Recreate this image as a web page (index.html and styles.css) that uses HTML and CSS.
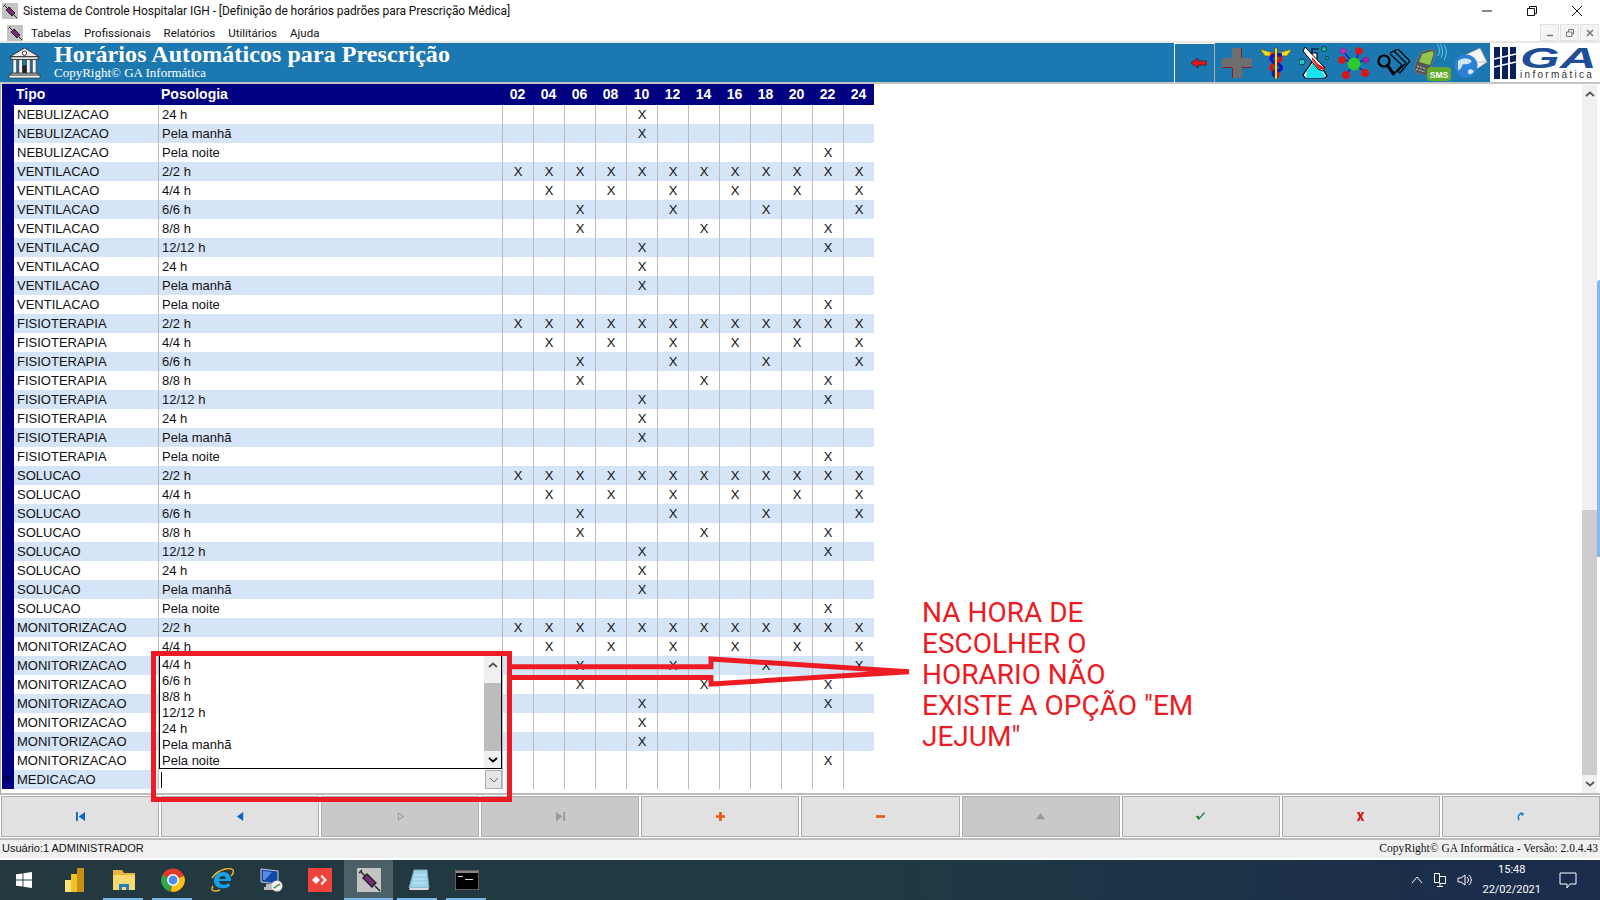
FILE: index.html
```html
<!DOCTYPE html>
<html>
<head>
    <title>Sistema de Controle Hospitalar IGH</title>
    <link rel="stylesheet" href="styles.css">
</head>
<body>
    <div class="titlebar">
        <svg class="app-icon" viewBox="0 0 16 16"><rect width="16" height="16" fill="#c4c4c4"/><path d="M1.500 3.500l2-2M2.500 2.500l3 3M4 7l3-3 6 6-3 3z" stroke="#222" fill="#7a2a78"/><path d="M7 6l2-1M12 12l3 3" stroke="#222"/></svg>
        <span class="title-text">Sistema de Controle Hospitalar IGH - [Definição de horários padrões para Prescrição Médica]</span>
        <div class="win-controls">
            <svg viewBox="0 0 12 12"><path d="M1 6h10" stroke="#111"/></svg>
            <svg viewBox="0 0 12 12"><path d="M1.500 3.500h7v7h-7zM3.500 3.500v-2h7v7h-2" stroke="#111" fill="none"/></svg>
            <svg viewBox="0 0 12 12"><path d="M1 1l10 10M11 1L1 11" stroke="#111" fill="none"/></svg>
        </div>
    </div>

    <div class="menubar">
        <svg class="app-icon" viewBox="0 0 16 16"><rect width="16" height="16" fill="#c4c4c4"/><path d="M1.500 3.500l2-2M2.500 2.500l3 3M4 7l3-3 6 6-3 3z" stroke="#222" fill="#7a2a78"/><path d="M7 6l2-1M12 12l3 3" stroke="#222"/></svg>
        <span>Tabelas</span>
        <span>Profissionais</span>
        <span>Relatórios</span>
        <span>Utilitários</span>
        <span>Ajuda</span>
        <div class="child-controls">
            <i><svg viewBox="0 0 10 10"><path d="M2 7.500h6" stroke="#777" stroke-width="1.500"/></svg></i>
            <i><svg viewBox="0 0 10 10"><path d="M1.500 4h5.500v4.500h-5.500zM3.500 4v-2.500h5v4.500h-1.500" stroke="#777" fill="none"/></svg></i>
            <i><svg viewBox="0 0 10 10"><path d="M2 2l6 6M8 2l-6 6" stroke="#777" stroke-width="1.500"/></svg></i>
        </div>
    </div>

    <div class="banner">
        <svg class="bank-icon" viewBox="0 0 34 34">
            <path d="M2 11L17 2l15 9z" fill="#e8e8e8" stroke="#333"/>
            <circle cx="17" cy="7.500" r="2.200" fill="#fff" stroke="#333"/>
            <rect x="3" y="11" width="28" height="3" fill="#ddd" stroke="#333"/>
            <path d="M5 14h4v14H5zM11 14h4v14h-4zM19 14h4v14h-4zM25 14h4v14h-4z" fill="#f2f2f2" stroke="#333" stroke-width=".8"/>
            <rect x="15" y="20" width="4" height="8" fill="#222"/>
            <rect x="3" y="28" width="28" height="2" fill="#ddd" stroke="#333" stroke-width=".8"/>
            <rect x="1" y="30" width="32" height="3" fill="#eee" stroke="#333" stroke-width=".8"/>
        </svg>
        <div class="banner-text">
            <div class="banner-title">Horários Automáticos para Prescrição</div>
            <div class="banner-sub">CopyRight© GA Informática</div>
        </div>
        <div class="tools">
            <div class="tool-back">
                <svg viewBox="0 0 16 10" width="16" height="10"><path d="M0 5l7-5v3h9v4H7v3z" fill="#e8141c" stroke="#222" stroke-width=".7"/></svg>
            </div>
            <div class="tool"><svg width="30" height="30" viewBox="0 0 30 30"><path d="M10 0h10v10h10v10H20v10H10V20H0V10h10z" fill="#6e6e6e"/><path d="M0 19.500h10M20 19.500h10M19.500 0v10M10.500 20v10" stroke="#8c1c1c"/></svg></div>
            <div class="tool"><svg width="32" height="32" viewBox="0 0 32 32"><path d="M14 6L0 2l5 7 9 0zM18 6L32 2l-5 7-9 0z" fill="#e8e020" stroke="#554" stroke-width=".7"/><path d="M10 8c12-1 14 5 6 8-7 3-7 7 0 8 4 1 3 4 0 6" stroke="#e01010" stroke-width="3.500" fill="none"/><path d="M22 8C10 7 8 13 16 16c7 3 7 7 0 8-4 1-3 4 0 6" stroke="#1010c8" stroke-width="3.500" fill="none"/><rect x="14.800" y="1" width="2.400" height="31" fill="#f0e010" stroke="#222" stroke-width=".4"/></svg></div>
            <div class="tool"><svg width="32" height="33" viewBox="0 0 32 33"><path d="M12 7l6 0 0 8 10 15-2 2H6l-2-3 9-13z" fill="#fff" stroke="#000" stroke-width="1.200"/><path d="M8 25l6-8 4 1 8 12-2 2H7z" fill="#18e4f0"/><path d="M12 3l8 0M13 3v10" stroke="#000"/><path d="M8 1L6 5l15 18 5 2 2-3z" fill="#fff" stroke="#000" stroke-width="1" transform="translate(-2 0)"/><path d="M13 11l6 7 7 4-2 2-5-2-6-8z" fill="#e81c1c"/><circle cx="3" cy="16" r="3" fill="#1cc8c8" stroke="#000" stroke-width=".6"/><circle cx="25" cy="3" r="2.500" fill="#18c090" stroke="#000" stroke-width=".6"/><circle cx="28" cy="12" r="1.500" fill="#18c090" stroke="#000" stroke-width=".5"/></svg></div>
            <div class="tool"><svg width="32" height="32" viewBox="0 0 32 32"><path d="M16 17L5 12M16 17L21 6M16 17L5 4M16 17L8 28M16 17l10 7M16 17l11-4" stroke="#1818c8" stroke-width="1.500"/><circle cx="16" cy="17" r="6.500" fill="#2cc82c"/><circle cx="5" cy="4" r="3" fill="#c828c8" stroke="#444" stroke-width=".5"/><circle cx="21" cy="4" r="3.800" fill="#d81818"/><circle cx="4" cy="13" r="3.800" fill="#d81818"/><circle cx="28" cy="13" r="3" fill="#b018b0" stroke="#444" stroke-width=".5"/><circle cx="8" cy="28" r="4" fill="#d81818"/><circle cx="27" cy="26" r="4" fill="#d81818"/></svg></div>
            <div class="tool"><svg width="34" height="28" viewBox="0 0 34 28"><path d="M14 4l8-4 12 12-10 12-4-3M18 2l12 12-9 9M14 5l12 11-7 8-4-3" fill="none" stroke="#000" stroke-width="1.200"/><circle cx="8" cy="12" r="5.500" fill="none" stroke="#000" stroke-width="2.200"/><path d="M12 17l6 9" stroke="#000" stroke-width="3"/></svg></div>
            <div class="tool"><svg width="38" height="38" viewBox="0 0 38 38"><path d="M8 8l11-3 4 3-8 24-12-3-2-6z" fill="#555" stroke="#888" stroke-width=".5"/><path d="M9 10l10-3 2 2-4 12-11-3z" fill="#8fc650"/><path d="M4 22l9 3M3 25l9 3" stroke="#ccc" stroke-dasharray="2 1"/><path d="M24 0c3 3 3 8 1 12M27 0c3 4 3 10 1 14M31 1c3 4 3 10 0 15" stroke="#5fd0e0" fill="none"/><rect x="14" y="23" width="24" height="14" rx="4" fill="#62ab2c"/><text x="26" y="33.500" class="sms-text">SMS</text></svg></div>
            <div class="tool"><svg width="33" height="31" viewBox="0 0 33 31"><path d="M9 9L26 1l7 14-16 11z" fill="#f6f6f6" stroke="#999" stroke-width=".6"/><path d="M10 9l13 6 10 0" stroke="#bbb" fill="none"/><circle cx="12" cy="19" r="11.500" fill="#2e7fd8"/><path d="M4 14c5-4 9-3 13-1 2 3-4 5-7 4-3 1-2 6-6 6zM20 24c-3-3-7-2-6 2 1 2 4 2 6-2z" fill="#cfe6fa"/></svg></div>
        </div>
        <div class="ga-logo">
            <svg viewBox="0 0 22 34" width="22" height="34"><path d="M0 1h6v32H0zM8 1h6v32H8zM16 1h6v32h-6z" fill="#0b1f5c"/><path d="M0 13l22-5M0 21l22-5" stroke="#fff" stroke-width="1.500"/></svg>
            <div class="ga-text">
                <div class="ga-big">GA</div>
                <div class="ga-small">informática</div>
            </div>
        </div>
    </div>

    <div class="main">
        <div class="grid-wrap">
            <table class="grid">
                <colgroup>
                    <col class="c-tipo"><col class="c-poso">
                    <col><col><col><col><col><col><col><col><col><col><col><col>
                </colgroup>
                <thead>
                    <tr><th class="tl">Tipo</th><th class="tl">Posologia</th><th>02</th><th>04</th><th>06</th><th>08</th><th>10</th><th>12</th><th>14</th><th>16</th><th>18</th><th>20</th><th>22</th><th>24</th></tr>
                </thead>
                <tbody>
                    <tr><td>NEBULIZACAO</td><td>24 h</td><td></td><td></td><td></td><td></td><td>X</td><td></td><td></td><td></td><td></td><td></td><td></td><td></td></tr>
                    <tr><td>NEBULIZACAO</td><td>Pela manhã</td><td></td><td></td><td></td><td></td><td>X</td><td></td><td></td><td></td><td></td><td></td><td></td><td></td></tr>
                    <tr><td>NEBULIZACAO</td><td>Pela noite</td><td></td><td></td><td></td><td></td><td></td><td></td><td></td><td></td><td></td><td></td><td>X</td><td></td></tr>
                    <tr><td>VENTILACAO</td><td>2/2 h</td><td>X</td><td>X</td><td>X</td><td>X</td><td>X</td><td>X</td><td>X</td><td>X</td><td>X</td><td>X</td><td>X</td><td>X</td></tr>
                    <tr><td>VENTILACAO</td><td>4/4 h</td><td></td><td>X</td><td></td><td>X</td><td></td><td>X</td><td></td><td>X</td><td></td><td>X</td><td></td><td>X</td></tr>
                    <tr><td>VENTILACAO</td><td>6/6 h</td><td></td><td></td><td>X</td><td></td><td></td><td>X</td><td></td><td></td><td>X</td><td></td><td></td><td>X</td></tr>
                    <tr><td>VENTILACAO</td><td>8/8 h</td><td></td><td></td><td>X</td><td></td><td></td><td></td><td>X</td><td></td><td></td><td></td><td>X</td><td></td></tr>
                    <tr><td>VENTILACAO</td><td>12/12 h</td><td></td><td></td><td></td><td></td><td>X</td><td></td><td></td><td></td><td></td><td></td><td>X</td><td></td></tr>
                    <tr><td>VENTILACAO</td><td>24 h</td><td></td><td></td><td></td><td></td><td>X</td><td></td><td></td><td></td><td></td><td></td><td></td><td></td></tr>
                    <tr><td>VENTILACAO</td><td>Pela manhã</td><td></td><td></td><td></td><td></td><td>X</td><td></td><td></td><td></td><td></td><td></td><td></td><td></td></tr>
                    <tr><td>VENTILACAO</td><td>Pela noite</td><td></td><td></td><td></td><td></td><td></td><td></td><td></td><td></td><td></td><td></td><td>X</td><td></td></tr>
                    <tr><td>FISIOTERAPIA</td><td>2/2 h</td><td>X</td><td>X</td><td>X</td><td>X</td><td>X</td><td>X</td><td>X</td><td>X</td><td>X</td><td>X</td><td>X</td><td>X</td></tr>
                    <tr><td>FISIOTERAPIA</td><td>4/4 h</td><td></td><td>X</td><td></td><td>X</td><td></td><td>X</td><td></td><td>X</td><td></td><td>X</td><td></td><td>X</td></tr>
                    <tr><td>FISIOTERAPIA</td><td>6/6 h</td><td></td><td></td><td>X</td><td></td><td></td><td>X</td><td></td><td></td><td>X</td><td></td><td></td><td>X</td></tr>
                    <tr><td>FISIOTERAPIA</td><td>8/8 h</td><td></td><td></td><td>X</td><td></td><td></td><td></td><td>X</td><td></td><td></td><td></td><td>X</td><td></td></tr>
                    <tr><td>FISIOTERAPIA</td><td>12/12 h</td><td></td><td></td><td></td><td></td><td>X</td><td></td><td></td><td></td><td></td><td></td><td>X</td><td></td></tr>
                    <tr><td>FISIOTERAPIA</td><td>24 h</td><td></td><td></td><td></td><td></td><td>X</td><td></td><td></td><td></td><td></td><td></td><td></td><td></td></tr>
                    <tr><td>FISIOTERAPIA</td><td>Pela manhã</td><td></td><td></td><td></td><td></td><td>X</td><td></td><td></td><td></td><td></td><td></td><td></td><td></td></tr>
                    <tr><td>FISIOTERAPIA</td><td>Pela noite</td><td></td><td></td><td></td><td></td><td></td><td></td><td></td><td></td><td></td><td></td><td>X</td><td></td></tr>
                    <tr><td>SOLUCAO</td><td>2/2 h</td><td>X</td><td>X</td><td>X</td><td>X</td><td>X</td><td>X</td><td>X</td><td>X</td><td>X</td><td>X</td><td>X</td><td>X</td></tr>
                    <tr><td>SOLUCAO</td><td>4/4 h</td><td></td><td>X</td><td></td><td>X</td><td></td><td>X</td><td></td><td>X</td><td></td><td>X</td><td></td><td>X</td></tr>
                    <tr><td>SOLUCAO</td><td>6/6 h</td><td></td><td></td><td>X</td><td></td><td></td><td>X</td><td></td><td></td><td>X</td><td></td><td></td><td>X</td></tr>
                    <tr><td>SOLUCAO</td><td>8/8 h</td><td></td><td></td><td>X</td><td></td><td></td><td></td><td>X</td><td></td><td></td><td></td><td>X</td><td></td></tr>
                    <tr><td>SOLUCAO</td><td>12/12 h</td><td></td><td></td><td></td><td></td><td>X</td><td></td><td></td><td></td><td></td><td></td><td>X</td><td></td></tr>
                    <tr><td>SOLUCAO</td><td>24 h</td><td></td><td></td><td></td><td></td><td>X</td><td></td><td></td><td></td><td></td><td></td><td></td><td></td></tr>
                    <tr><td>SOLUCAO</td><td>Pela manhã</td><td></td><td></td><td></td><td></td><td>X</td><td></td><td></td><td></td><td></td><td></td><td></td><td></td></tr>
                    <tr><td>SOLUCAO</td><td>Pela noite</td><td></td><td></td><td></td><td></td><td></td><td></td><td></td><td></td><td></td><td></td><td>X</td><td></td></tr>
                    <tr><td>MONITORIZACAO</td><td>2/2 h</td><td>X</td><td>X</td><td>X</td><td>X</td><td>X</td><td>X</td><td>X</td><td>X</td><td>X</td><td>X</td><td>X</td><td>X</td></tr>
                    <tr><td>MONITORIZACAO</td><td>4/4 h</td><td></td><td>X</td><td></td><td>X</td><td></td><td>X</td><td></td><td>X</td><td></td><td>X</td><td></td><td>X</td></tr>
                    <tr><td>MONITORIZACAO</td><td></td><td></td><td></td><td>X</td><td></td><td></td><td>X</td><td></td><td></td><td>X</td><td></td><td></td><td>X</td></tr>
                    <tr><td>MONITORIZACAO</td><td></td><td></td><td></td><td>X</td><td></td><td></td><td></td><td>X</td><td></td><td></td><td></td><td>X</td><td></td></tr>
                    <tr><td>MONITORIZACAO</td><td></td><td></td><td></td><td></td><td></td><td>X</td><td></td><td></td><td></td><td></td><td></td><td>X</td><td></td></tr>
                    <tr><td>MONITORIZACAO</td><td></td><td></td><td></td><td></td><td></td><td>X</td><td></td><td></td><td></td><td></td><td></td><td></td><td></td></tr>
                    <tr><td>MONITORIZACAO</td><td></td><td></td><td></td><td></td><td></td><td>X</td><td></td><td></td><td></td><td></td><td></td><td></td><td></td></tr>
                    <tr><td>MONITORIZACAO</td><td></td><td></td><td></td><td></td><td></td><td></td><td></td><td></td><td></td><td></td><td></td><td>X</td><td></td></tr>
                    <tr class="new-row"><td><span class="star">*</span>MEDICACAO</td><td></td><td></td><td></td><td></td><td></td><td></td><td></td><td></td><td></td><td></td><td></td><td></td><td></td></tr>
                </tbody>
            </table>
        </div>
        <div class="scrollbar">
            <div class="sb-btn"><svg viewBox="0 0 10 6" width="10" height="6"><path d="M1 5l4-3.500L9 5" stroke="#555" stroke-width="1.800" fill="none"/></svg></div>
            <div class="sb-track"><div class="sb-thumb"></div></div>
            <div class="sb-btn"><svg viewBox="0 0 10 6" width="10" height="6"><path d="M1 1l4 3.500L9 1" stroke="#555" stroke-width="1.800" fill="none"/></svg></div>
        </div>
    </div>

    <div class="nav">
        <div class="nav-btn"><svg viewBox="0 0 12 10"><path d="M1 0h2v10H1zM11 0v10L4 5z" fill="#0a64c8"/></svg></div>
        <div class="nav-btn"><svg viewBox="0 0 12 10"><path d="M9 0v10L2 5z" fill="#0a64c8"/></svg></div>
        <div class="nav-btn off"><svg viewBox="0 0 12 10"><path d="M3 0v10l7-5zM4 2v6l4-3z" fill="#999" fill-rule="evenodd"/></svg></div>
        <div class="nav-btn off"><svg viewBox="0 0 12 10"><path d="M1 0v10l7-5zM9 0h2v10H9z" fill="#999"/></svg></div>
        <div class="nav-btn"><svg viewBox="0 0 12 10"><path d="M4.500 0h3v3.500H11v3H7.500V10h-3V6.500H1v-3h3.500z" fill="#e85a10"/></svg></div>
        <div class="nav-btn"><svg viewBox="0 0 12 10"><path d="M1 3.500h10v3H1z" fill="#e85a10"/></svg></div>
        <div class="nav-btn off"><svg viewBox="0 0 12 10"><path d="M6 1l5 7H1z" fill="#999"/></svg></div>
        <div class="nav-btn"><svg viewBox="0 0 12 10"><path d="M1 5l3 4 7-8-1-1-5 6-2-2z" fill="#0a7a30"/></svg></div>
        <div class="nav-btn"><svg viewBox="0 0 12 10"><path d="M2 0h3l1 3 1.500-3H10L7.500 5 10 10H7.500L6 7 4.500 10H2l2.500-5z" fill="#d81818"/></svg></div>
        <div class="nav-btn"><svg viewBox="0 0 12 12"><path d="M4 11C2 7 3 3 7 2" stroke="#1a80c8" stroke-width="2" fill="none"/><path d="M6 0l5 2-3 4z" fill="#1a80c8"/></svg></div>
    </div>

    <div class="statusbar">
        <span>Usuário:1 ADMINISTRADOR</span>
        <span class="status-right">CopyRight© GA Informática - Versão: 2.0.4.43</span>
    </div>

    <div class="taskbar">
        <div class="task start"><svg viewBox="0 0 16 16" width="16" height="16"><path d="M0 2.300l6.500-.9v6.200H0zM7.400 1.300L16 0v7.600H7.400zM0 8.400h6.500v6.200L0 13.700zM7.400 8.400H16V16l-8.600-1.300z" fill="#fff"/></svg></div>
        <div class="task"><svg viewBox="0 0 20 24" width="20" height="24"><path d="M0 12h7v12H0z" fill="#f9e27a"/><path d="M6 6h7v18H6z" fill="#eec22c"/><path d="M12 0h7v24h-7z" fill="#c98f10"/></svg></div>
        <div class="task on"><svg viewBox="0 0 24 20" width="24" height="20"><path d="M1 0h9l2 3h11v17H1z" fill="#e8b440"/><path d="M1 5h22v15H1z" fill="#fcd96e"/><path d="M7 14h10v6h-3v-3h-4v3H7z" fill="#1a80c8"/></svg></div>
        <div class="task on"><svg viewBox="0 0 24 24" width="24" height="24"><circle cx="12" cy="12" r="11.500" fill="#e33b2e"/><path d="M12 12L1.500 7A11.500 11.500 0 0 0 9 23.500z" fill="#2fa84f"/><path d="M12 12l-2 11.500A11.500 11.500 0 0 0 23 8z" fill="#fbc116"/><circle cx="12" cy="12" r="5.200" fill="#4a8ef0" stroke="#fff" stroke-width="1.500"/></svg></div>
        <div class="task"><svg viewBox="0 0 24 24" width="24" height="24"><path d="M4 13c0-6 4-9 9-9s8 3 8 9H9c0 4 6 5 10 2l1 3c-5 4-16 3-16-5zm5-2h7c0-4-6-4-7 0z" fill="#1aa0e4"/><path d="M2 10C8 1 20-1 23 2c1 2-1 5-2 6M3 18c-3 5 1 6 7 4" stroke="#f0b020" stroke-width="1.500" fill="none"/></svg></div>
        <div class="task"><svg viewBox="0 0 24 24" width="24" height="24"><path d="M2 1l17 2v13L2 14z" fill="#1248a8" stroke="#ccd"/><path d="M4 3l9 1-7 8-2 0z" fill="#5a8ce0"/><path d="M7 16h6v3h3v3H5v-3h2z" fill="#bbb"/><circle cx="18" cy="18" r="5.500" fill="#eee"/><path d="M15 20l6-4" stroke="#2a8a30" stroke-width="1.500"/></svg></div>
        <div class="task"><svg viewBox="0 0 24 24" width="24" height="24"><rect width="24" height="24" fill="#ef443b"/><path d="M8 8l4 4-4 4-4-4zM14 7l5 5-5 5-1.500-1.500 3.500-3.500-3.500-3.500z" fill="#fff"/></svg></div>
        <div class="task active on"><svg viewBox="0 0 24 24" width="24" height="24"><rect width="24" height="24" fill="#c4c4c4"/><path d="M2 5l3-3M4 4l4 4M6 10l4-4 9 9-4 4z" stroke="#222" stroke-width="1.400" fill="#7a2a78"/><path d="M18 18l5 5" stroke="#222" stroke-width="1.400"/></svg></div>
        <div class="task on"><svg viewBox="0 0 24 24" width="24" height="24"><path d="M8 2h13l2 18H3z" fill="#9ed4e6" stroke="#7ab"/><path d="M4 20h19l-1 2H3z" fill="#ddd"/><path d="M9 7h10M8 11h11M7 15h12" stroke="#c8ecf6"/></svg></div>
        <div class="task on"><svg viewBox="0 0 24 20" width="24" height="20"><rect width="24" height="20" fill="#000" stroke="#bbb"/><rect x="1" y="1" width="22" height="2" fill="#888"/><path d="M3 6h5v1H3zM10 9h8v1h-8z" fill="#ddd"/></svg></div>
        <div class="tray">
            <svg viewBox="0 0 12 8" width="12" height="8"><path d="M1 7l5-6 5 6" stroke="#fff" fill="none"/></svg>
            <svg viewBox="0 0 16 16" width="16" height="16"><path d="M2.500 1.500h5v9h-5zM7.500 4.500h6v7h-6M8 11.500v3M5 14.500h6" stroke="#fff" fill="none"/></svg>
            <svg viewBox="0 0 16 16" width="16" height="16"><path d="M1 6h3l4-3v10l-4-3H1zM10 5c2 2 2 4 0 6M12 3c3 3 3 7 0 10" stroke="#fff" fill="none"/></svg>
            <div class="clock"><div>15:48</div><div>22/02/2021</div></div>
            <svg class="notify" viewBox="0 0 18 18" width="18" height="18"><path d="M1 2h16v11H11l-3 4v-4H1z" stroke="#fff" fill="none"/></svg>
        </div>
    </div>

    <!-- lista aberta do combo de posologia -->
    <div class="combo-list">
        <div>4/4 h</div><div>6/6 h</div><div>8/8 h</div><div>12/12 h</div><div>24 h</div><div>Pela manhã</div><div>Pela noite</div>
        <div class="combo-sb">
            <div class="combo-sb-btn"><svg viewBox="0 0 10 6" width="10" height="6"><path d="M1 5l4-3.500L9 5" stroke="#555" stroke-width="1.800" fill="none"/></svg></div>
            <div class="combo-sb-thumb"></div>
            <div class="combo-sb-btn"><svg viewBox="0 0 10 6" width="10" height="6"><path d="M1 1l4 3.500L9 1" stroke="#000" stroke-width="1.800" fill="none"/></svg></div>
        </div>
    </div>
    <div class="combo-edit">
        <span class="caret"></span>
        <span class="combo-arrow"><svg viewBox="0 0 10 6" width="10" height="6"><path d="M1 1l4 4 4-4" stroke="#666" fill="none"/></svg></span>
    </div>

    <!-- marcacao em vermelho por cima da tela -->
    <div class="red-box"></div>
    <svg class="red-arrow" viewBox="0 0 410 45" width="410" height="45">
        <path d="M0 16.700H202V9L400 21.700 202 34V27.500H0" fill="none" stroke="#ed1c24" stroke-width="5"/>
    </svg>
    <div class="note">NA HORA DE<br>ESCOLHER O<br>HORARIO NÃO<br>EXISTE A OPÇÃO "EM<br>JEJUM"</div>

    <div class="side-tab"></div>
</body>
</html>
```

FILE: styles.css
```css
* {
    box-sizing: border-box;
}
html, body {
    height: 100%;
}
body {
    margin: 0;
    width: 1600px;
    height: 900px;
    overflow: hidden;
    display: flex;
    flex-direction: column;
    position: relative;
    background: #fff;
    font-family: "Liberation Sans", Arial, sans-serif;
    font-size: 13px;
    color: #111;
}
.titlebar {
    height: 22px;
    display: flex;
    align-items: center;
    padding-left: 2px;
    font-family: "Roboto", sans-serif;
    font-size: 12px;
    letter-spacing: -.07px;
}
.app-icon {
    width: 16px;
    height: 16px;
    flex: none;
}
.title-text {
    margin-left: 5px;
}
.win-controls {
    margin-left: auto;
    display: flex;
    height: 22px;
    align-items: center;
}
.win-controls svg {
    width: 12px;
    height: 12px;
    margin: 0 17px 0 16px;
}
.menubar {
    height: 19px;
    padding: 2px 0 0 7px;
    display: flex;
    align-items: center;
    font-family: "Roboto", sans-serif;
    font-size: 11.500px;
    gap: 13px;
}
.menubar .app-icon {
    margin-right: -5px;
}
.child-controls {
    margin-left: auto;
    display: flex;
    gap: 1px;
    margin-right: 1px;
}
.child-controls i {
    width: 19px;
    height: 17px;
    background: #f4f4f4;
    border: 1px solid #e2e2e2;
    display: flex;
    align-items: center;
    justify-content: center;
}
.child-controls svg {
    width: 10px;
    height: 10px;
}
.banner {
    height: 43px;
    background: #1c78b0;
    border-top: 2px solid #e8e8e8;
    border-bottom: 2px solid #c4c4c4;
    display: flex;
    align-items: center;
    color: #fff;
}
.bank-icon {
    width: 33px;
    height: 33px;
    margin-left: 8px;
    flex: none;
}
.banner-text {
    margin-left: 13px;
    margin-top: -3px;
    font-family: "Liberation Serif", "Times New Roman", serif;
}
.banner-title {
    font-size: 24px;
    font-weight: bold;
    line-height: 23px;
    letter-spacing: .07px;
}
.banner-sub {
    font-size: 13px;
    line-height: 13px;
}
.tools {
    margin-left: auto;
    display: flex;
    align-items: center;
    height: 100%;
}
.tool-back {
    width: 41px;
    height: 100%;
    margin-right: 2px;
    padding-left: 9px;
    border-left: 1px solid #fff;
    border-top: 1px solid #fff;
    border-right: 1px solid #aaa;
    display: flex;
    align-items: center;
    justify-content: center;
}
.tool {
    width: 39px;
    height: 100%;
    display: flex;
    align-items: center;
    justify-content: center;
}
.sms-text {
    font-size: 8.500px;
    font-weight: bold;
    fill: #fff;
    text-anchor: middle;
}
.ga-logo {
    width: 110px;
    height: 100%;
    background: #fff;
    display: flex;
    align-items: center;
    padding-left: 4px;
    gap: 4px;
    color: #1d4e96;
}
.ga-text {
    width: 80px;
}
.ga-big {
    font-weight: bold;
    font-style: italic;
    font-size: 30px;
    line-height: 25px;
    height: 25px;
    transform: scaleX(1.700);
    transform-origin: left;
    color: #1d4e96;
}
.ga-small {
    font-size: 10px;
    line-height: 10px;
    letter-spacing: 2.300px;
    color: #333;
    white-space: nowrap;
}
.main {
    height: 711px;
    display: flex;
    border-bottom: 2px solid #bbb;
}
.grid-wrap {
    flex: 1;
    padding-left: 1px;
    border-left: 1px solid #aaa;
}
.grid {
    border-collapse: separate;
    border-spacing: 0;
    table-layout: fixed;
    width: 872px;
}
.grid col {
    width: 31px;
}
.grid col.c-tipo {
    width: 156px;
}
.grid col.c-poso {
    width: 344px;
}
.grid th {
    background: #000080;
    color: #fff;
    font-size: 14px;
    height: 21px;
    padding: 0 0 1px;
    text-align: center;
}
.grid th.tl {
    text-align: left;
}
.grid th:first-child {
    padding-left: 14px;
}
.grid th:nth-child(2) {
    padding-left: 3px;
}
.grid td {
    height: 19px;
    padding: 0;
    text-align: center;
    border-left: 1px solid #bcbcbc;
    line-height: 18px;
    white-space: nowrap;
    overflow: hidden;
}
.grid td:first-child {
    text-align: left;
    border-left: 12px solid #000080;
    padding-left: 3px;
    position: relative;
}
.grid td:nth-child(2) {
    text-align: left;
    padding-left: 3px;
}
.grid tbody tr:nth-child(even) {
    background: #d6e4f7;
}
.grid tr.new-row {
    background: transparent !important;
}
.grid tr.new-row td:first-child {
    background: #d6e4f7;
    overflow: visible;
}
.star {
    position: absolute;
    left: -9px;
    color: #000;
    font-size: 14px;
}
.scrollbar {
    width: 15px;
    margin: 1px 3px 0 0;
    display: flex;
    flex-direction: column;
    background: #f0f0f0;
}
.sb-btn {
    height: 18px;
    display: flex;
    align-items: center;
    justify-content: center;
}
.sb-track {
    flex: 1;
    display: flex;
    flex-direction: column;
    padding-top: 407px;
}
.sb-thumb {
    flex: 1;
    background: #cdcdcd;
}
.nav {
    height: 45px;
    display: flex;
    padding: 1px 0 1px 1px;
    gap: 2px;
    border-bottom: 2px solid #bbb;
}
.nav-btn {
    flex: 1;
    background: #e1e1e1;
    border: 1px solid #adadad;
    display: flex;
    align-items: center;
    justify-content: center;
}
.nav-btn.off {
    background: #c9c9c9;
}
.nav-btn svg {
    width: 11px;
    height: 9px;
}
.statusbar {
    height: 18px;
    background: #f0f0f0;
    display: flex;
    justify-content: space-between;
    align-items: center;
    padding: 0 2px 2px;
    font-size: 11px;
}
.status-right {
    font-family: "Liberation Serif", serif;
    font-size: 11.500px;
}
.taskbar {
    height: 40px;
    margin-top: 2px;
    background: linear-gradient(90deg, #24383f, #1f3a44 55%, #1a2b4c);
    display: flex;
    color: #fff;
    font-family: "Roboto", sans-serif;
    font-size: 11px;
}
.task {
    width: 49px;
    height: 100%;
    display: flex;
    align-items: center;
    justify-content: center;
    position: relative;
}
.task.start {
    width: 50px;
    padding-right: 2px;
}
.task.active {
    background: #4c6068;
}
.task.on::after {
    content: "";
    position: absolute;
    left: 4px;
    right: 5px;
    bottom: 0;
    height: 2px;
    background: #76b9ed;
}
.task.active.on::after {
    left: 0;
    right: 0;
}
.tray {
    margin-left: auto;
    display: flex;
    align-items: center;
    gap: 9px;
    padding-right: 23px;
}
.clock {
    text-align: center;
    line-height: 20px;
}
.notify {
    margin-left: 9px;
}
/* por cima da grade */
.combo-list {
    position: absolute;
    left: 159px;
    top: 655px;
    width: 343px;
    height: 114px;
    background: #fff;
    border: 1px solid #000;
    padding: 1px 0 0 2px;
    line-height: 16px;
    font-size: 13px;
}
.combo-sb {
    position: absolute;
    right: 0;
    top: 0;
    bottom: 0;
    width: 17px;
    background: #f0f0f0;
    display: flex;
    flex-direction: column;
}
.combo-sb-btn {
    height: 17px;
    display: flex;
    align-items: center;
    justify-content: center;
    flex: none;
}
.combo-sb-thumb {
    flex: 1;
    margin-top: 10px;
    background: #bcbcbc;
}
.combo-edit {
    position: absolute;
    left: 159px;
    top: 770px;
    width: 343px;
    height: 19px;
    background: #fff;
    display: flex;
    justify-content: space-between;
    align-items: center;
    padding-left: 2px;
}
.caret {
    width: 1px;
    height: 16px;
    background: #000;
}
.combo-arrow {
    width: 17px;
    height: 19px;
    background: #e6e6e6;
    border: 1px solid #aaa;
    display: flex;
    align-items: center;
    justify-content: center;
}
.red-box {
    position: absolute;
    left: 151px;
    top: 651px;
    width: 361px;
    height: 151px;
    border: 5px solid #ed1c24;
}
.red-arrow {
    position: absolute;
    left: 509px;
    top: 650px;
}
.note {
    position: absolute;
    left: 922px;
    top: 597px;
    color: #ed1c24;
    font-family: "Roboto", sans-serif;
    font-size: 28px;
    line-height: 31px;
    white-space: nowrap;
}
.side-tab {
    position: absolute;
    left: 1597px;
    top: 280px;
    width: 3px;
    height: 277px;
    background: #8ab8ec;
    border-top-left-radius: 3px;
}
```
